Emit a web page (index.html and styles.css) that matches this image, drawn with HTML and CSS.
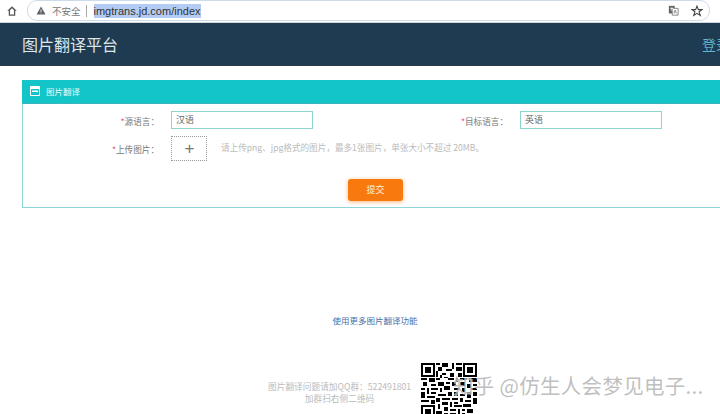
FILE: index.html

```html
<!DOCTYPE html>
<html lang="zh-CN">
<head>
  <meta charset="UTF-8" />
  <title>图片翻译平台</title>
  <link rel="stylesheet" href="styles.css">
</head>
<body>
  <div class="browserbar">
    <svg class="home" width="12" height="12" viewBox="0 0 14 14"><path d="M7 1.500 1.500 6.600h1.700V12.500h7.600V6.600h1.700zM4.700 11V6l2.300-2.100L9.300 6v5z" fill="#555" fill-rule="evenodd"/></svg>
    <div class="omnibox">
      <svg class="warn" width="10" height="9" viewBox="0 0 12 11"><path d="M6 .5 11.500 10.500H.5z" fill="#5f6368"/><path d="M5.500 4h1v3.400h-1zM5.500 8h1v1h-1z" fill="#fff"/></svg>
      <span class="insecure">不安全</span>
      <span class="sep"></span>
      <span class="url">imgtrans.jd.com/index</span>
      <span class="omni-right">
        <svg width="11" height="11" viewBox="0 0 13 13"><path d="M1 1h7v9H1z" fill="#666"/><path d="M5 4h7v8H5z" fill="#fff" stroke="#777"/><path d="M2.500 4h4M4.500 3v4" fill="none" stroke="#fff" stroke-width=".9"/><path d="M7 10l1.500-4 1.500 4" fill="none" stroke="#666" stroke-width=".9"/></svg>
        <svg width="12" height="12" viewBox="0 0 13 13"><path d="M6.500 1.200 8 5h4L8.800 7.400l1.200 4-3.500-2.400L3 11.400l1.200-4L1 5h4z" fill="none" stroke="#444" stroke-width="1.200"/></svg>
      </span>
    </div>
  </div>

  <header class="topnav">
    <span class="brand">图片翻译平台</span>
    <a class="login">登录</a>
  </header>

  <section class="panel">
    <div class="panel-head">
      <svg width="10" height="10" viewBox="0 0 10 10"><path d="M.5.5h9v9h-9z" fill="none" stroke="#fff"/><path d="M.5.5h9v2.500h-9zM2 4.500h6V6H2z" fill="#fff"/></svg>
      <span>图片翻译</span>
    </div>
    <div class="panel-body">
      <div class="row">
        <div class="field">
          <label class="lbl"><i>*</i>源语言：</label>
          <div class="inp">汉语</div>
        </div>
        <div class="field field-two">
          <label class="lbl"><i>*</i>目标语言：</label>
          <div class="inp">英语</div>
        </div>
      </div>
      <div class="row row-upload">
        <label class="lbl"><i>*</i>上传图片：</label>
        <div class="upload">+</div>
        <p class="hint">请上传png、jpg格式的图片，最多1张图片，单张大小不超过 20MB。</p>
      </div>
      <div class="actions"><button class="submit">提交</button></div>
    </div>
  </section>

  <a class="more">使用更多图片翻译功能</a>

  <footer class="foot">
    <div class="foot-text">
      <p>图片翻译问题请加QQ群：522491801</p>
      <p>加群扫右侧二维码</p>
    </div>
    <svg class="qr" width="56" height="56" viewBox="0 0 29 29" shape-rendering="crispEdges">
      <path fill-rule="evenodd" d="M0 0h7v7H0zM1 1v5h5V1zM2 2h3v3H2zM22 0h7v7h-7zM23 1v5h5V1zM24 2h3v3h-3zM0 22h7v7H0zM1 23v5h5v-5zM2 24h3v3H2z"/>
      <path d="M8 0h2v1H8zM11 0h3v2h-3zM16 0h1v3h-1zM18 0h3v1h-3zM9 2h2v2H9zM13 3h3v1h-3zM18 2h3v2h-3zM8 4h1v3H8zM11 5h2v1h-2zM15 5h2v2h-2zM19 5h2v2h-2zM10 6h1v2h-1zM12 7h2v1h-2zM0 8h3v1H0zM4 8h3v2H4zM8 8h2v1H8zM14 8h3v1h-3zM18 8h1v2h-1zM20 8h4v1h-4zM25 8h4v2h-4zM1 10h2v2H1zM5 11h3v1H5zM9 10h3v2H9zM13 10h2v1h-2zM16 10h2v2h-2zM20 10h3v2h-3zM24 11h2v2h-2zM27 11h2v1h-2zM0 13h2v1H0zM3 13h1v3H3zM5 13h4v1H5zM10 13h1v2h-1zM12 12h3v2h-3zM17 13h3v1h-3zM21 13h2v2h-2zM26 13h3v1h-3zM0 15h2v3H0zM5 15h3v1H5zM9 16h4v1H9zM14 15h2v2h-2zM17 15h2v2h-2zM20 16h3v1h-3zM24 15h2v3h-2zM27 15h2v2h-2zM3 17h4v1H3zM8 18h2v2H8zM11 18h4v1h-4zM16 18h3v1h-3zM20 18h2v2h-2zM23 19h3v1h-3zM27 18h2v3h-2zM0 19h4v1H0zM5 19h2v2H5zM11 20h3v2h-3zM15 20h1v3h-1zM17 20h2v1h-2zM9 21h1v3H9zM17 22h4v1h-4zM22 21h4v2h-4zM12 23h2v2h-2zM15 24h3v1h-3zM19 24h1v3h-1zM21 24h2v1h-2zM24 24h3v2h-3zM8 25h3v2H8zM12 26h2v3h-2zM15 26h3v1h-3zM21 26h2v3h-2zM25 27h4v2h-4zM8 28h3v1H8zM15 28h5v1h-5z"/>
    </svg>
  </footer>

  <div class="watermark">知乎 @仿生人会梦见电子...</div>
</body>
</html>
```

FILE: styles.css

```css
html, body {
  margin: 0;
  height: 414px;
  overflow: hidden;
}
body {
  position: relative;
  width: 720px;
  background-color: #fff;
  font-family: "Noto Sans CJK SC", "Liberation Sans", sans-serif;
  color: #666;
}
p {
  margin: 0;
}

/* browser chrome */
.browserbar {
  height: 23px;
  display: flex;
  align-items: flex-start;
  padding: 0 10px 0 6px;
  box-sizing: border-box;
  background-color: #fff;
  border-bottom: 1px solid #cfd6de;
}
.home {
  margin: 5px 9px 0 0;
}
.omnibox {
  flex: 1;
  height: 21px;
  padding-left: 8px;
  display: flex;
  align-items: center;
  box-sizing: border-box;
  border: 1px solid #ccdbea;
  border-radius: 10px;
  font-size: 9.500px;
}
.warn {
  margin-right: 6px;
}
.insecure {
  color: #777;
}
.sep {
  width: 1px;
  height: 12px;
  margin: 0 7px 0 5px;
  background-color: #aaa;
}
.url {
  font-family: "Liberation Sans", sans-serif;
  font-size: 11px;
  line-height: 14px;
  color: #333;
  background-color: #b4ccf4;
}
.omni-right {
  margin-left: auto;
  margin-right: 6px;
  display: flex;
  align-items: center;
  gap: 12px;
}

/* top nav */
.topnav {
  height: 43px;
  width: 730px;
  padding-left: 22px;
  box-sizing: border-box;
  display: flex;
  align-items: center;
  justify-content: space-between;
  background-color: #1f3b51;
  border-bottom: 1px solid #2a3a46;
}
.brand {
  font-size: 16px;
  color: #dfe6ea;
}
.login {
  font-size: 14px;
  color: #63b5cc;
}

/* form panel */
.panel {
  width: 720px;
  margin: 14px 0 0 22px;
  height: 128px;
  box-sizing: border-box;
  border: 1px solid #8fd5d5;
  border-right: 0;
}
.panel-head {
  height: 24px;
  margin: -1px 0 0 -1px;
  padding: 0 0 2px 8px;
  display: flex;
  align-items: center;
  gap: 6px;
  box-sizing: border-box;
  background-color: #13c4c9;
  border-bottom: 1px solid #3fb5bb;
  font-size: 8.500px;
  color: #e8fafa;
}
.panel-body {
  padding-top: 7px;
}
.row {
  display: flex;
  align-items: center;
}
.field {
  display: flex;
  align-items: center;
}
.lbl {
  width: 148px;
  padding: 1px 12px 0 0;
  box-sizing: border-box;
  text-align: right;
  font-size: 8.600px;
  color: #777;
}
.lbl i {
  font-style: normal;
  color: #e0527a;
}
.field-two .lbl {
  width: 207px;
}
.inp {
  width: 142px;
  height: 18px;
  padding-left: 4px;
  box-sizing: border-box;
  border: 1px solid #8ed4ce;
  font-size: 9px;
  line-height: 15px;
  color: #666;
}
.row-upload {
  margin-top: 7px;
}
.upload {
  width: 36px;
  height: 25px;
  box-sizing: border-box;
  border: 1px dotted #999;
  padding-left: 1px;
  text-align: center;
  font-family: "Liberation Sans", sans-serif;
  font-size: 17px;
  line-height: 24px;
  color: #777;
}
.hint {
  margin: -3px 0 0 14px;
  font-size: 8.600px;
  color: #bbb;
  white-space: nowrap;
}
.actions {
  margin-top: 13px;
  padding-left: 325px;
}
.submit {
  width: 55px;
  height: 22px;
  padding: 0;
  border: 0;
  border-radius: 3px;
  background-color: #f8790e;
  box-shadow: 0 1px 4px rgba(248, 121, 14, 0.55);
  font-family: inherit;
  font-size: 9px;
  color: #fdf0e0;
}

/* bottom */
.more {
  display: block;
  margin-top: 106px;
  padding-left: 30px;
  text-align: center;
  font-size: 8.500px;
  line-height: 13px;
  color: #4a6fa8;
}
.foot {
  margin-top: 36px;
  display: flex;
  padding-left: 268px;
}
.foot-text {
  width: 143px;
  margin-top: 18px;
  font-size: 8.700px;
  line-height: 12px;
  color: #bbb;
  text-align: center;
  white-space: nowrap;
}
.qr {
  margin-left: 10px;
  flex: none;
}
.watermark {
  position: absolute;
  left: 453px;
  top: 373px;
  font-size: 20.500px;
  letter-spacing: 0.3px;
  line-height: 24px;
  color: rgba(180, 180, 180, 0.85);
  text-shadow: 1px 1px 0 rgba(255, 255, 255, 0.6);
  white-space: nowrap;
}
```
